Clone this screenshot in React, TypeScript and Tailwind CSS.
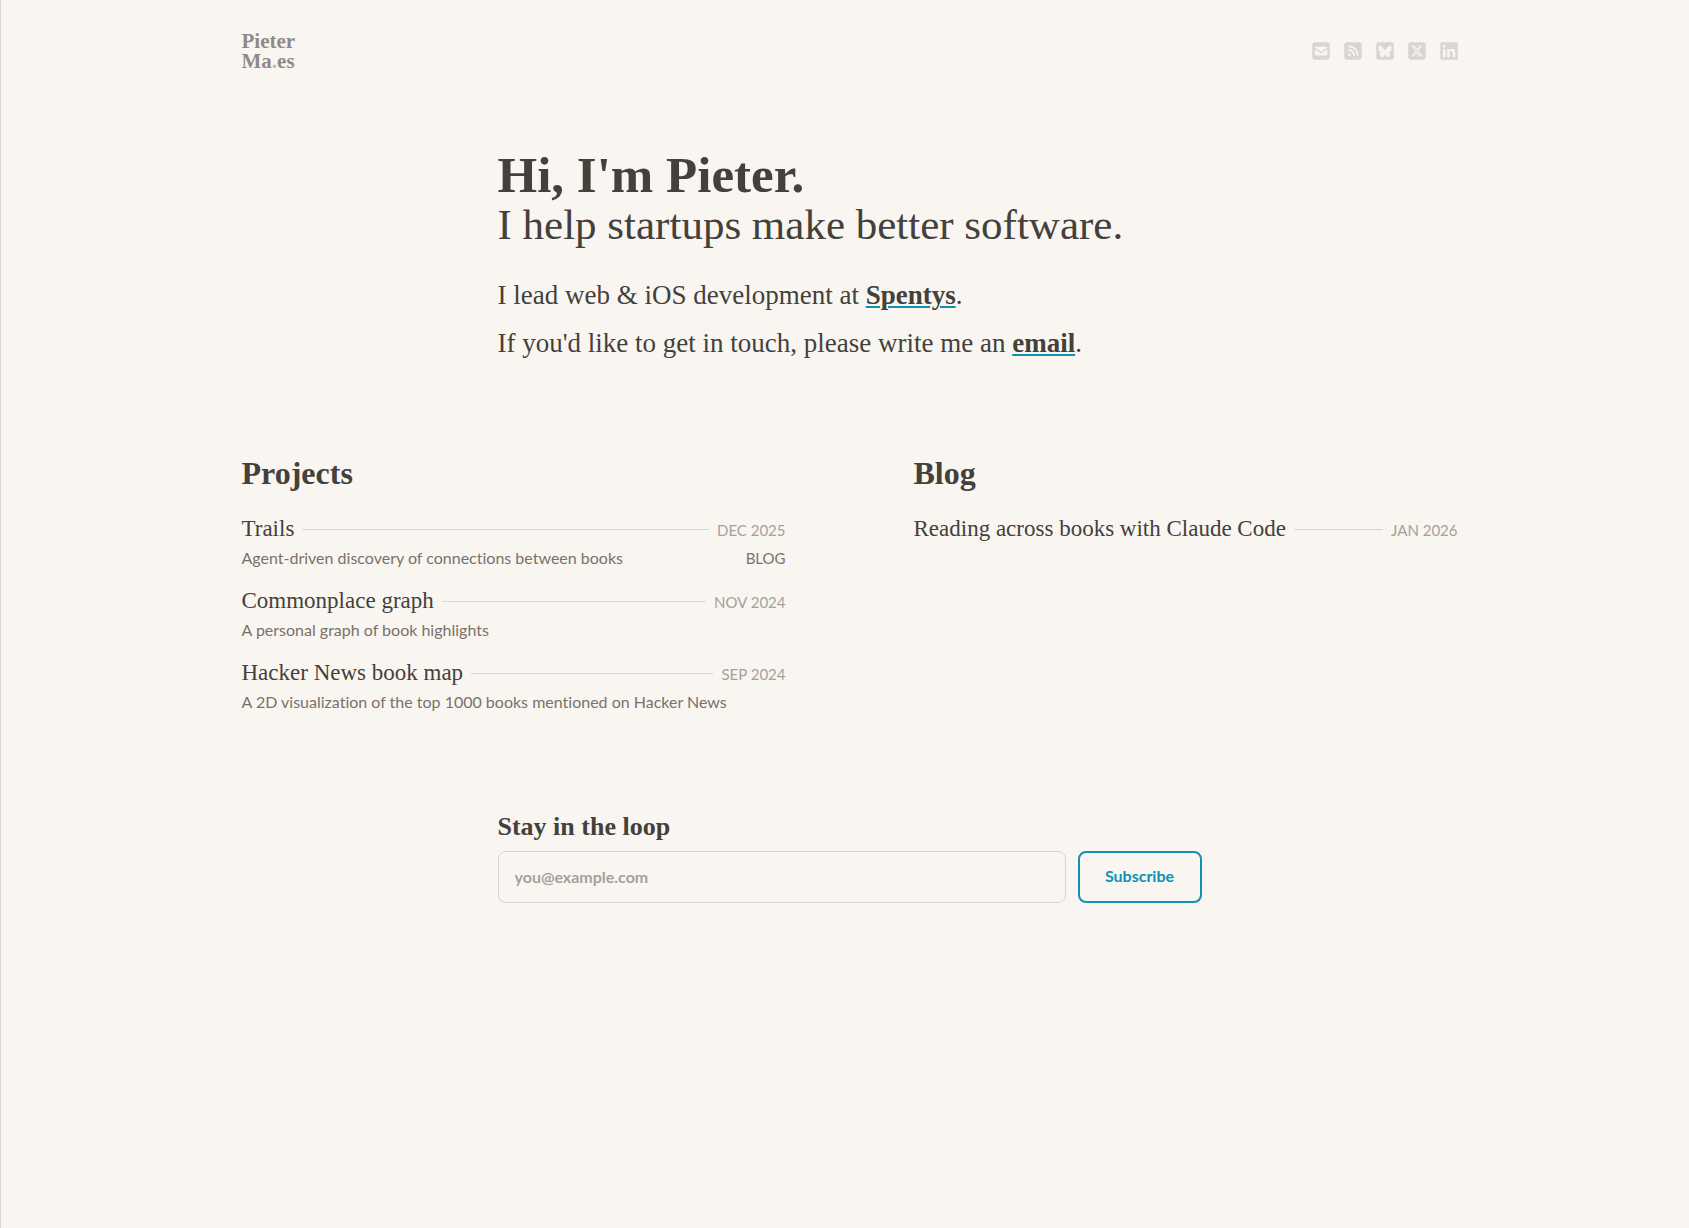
import type { ReactNode } from "react";
import {
  FaLinkedin,
  FaSquareEnvelope,
  FaSquareRss,
  FaSquareXTwitter,
} from "react-icons/fa6";

type Entry = {
  title: string;
  href: string;
  date: string;
  description?: string;
  link?: { label: string; href: string };
};

const PROJECTS: Entry[] = [
  {
    title: "Trails",
    href: "#trails",
    date: "Dec 2025",
    description: "Agent-driven discovery of connections between books",
    link: { label: "Blog", href: "#reading-across-books" },
  },
  {
    title: "Commonplace graph",
    href: "#commonplace",
    date: "Nov 2024",
    description: "A personal graph of book highlights",
  },
  {
    title: "Hacker News book map",
    href: "#hn-book-map",
    date: "Sep 2024",
    description: "A 2D visualization of the top 1000 books mentioned on Hacker News",
  },
];

const POSTS: Entry[] = [
  {
    title: "Reading across books with Claude Code",
    href: "#reading-across-books",
    date: "Jan 2026",
  },
];

// Same 448x512 frame as the Font Awesome squares it sits next to
function SquareBluesky({ className }: { className?: string }) {
  return (
    <svg viewBox="0 0 448 512" fill="currentColor" className={className}>
      <rect y="32" width="448" height="448" rx="64" />
      <path
        transform="translate(56 98) scale(14)"
        className="fill-[#f9f6f1]"
        d="M12 10.8c-1.087-2.114-4.046-6.053-6.798-7.995C2.566.944 1.561 1.266.902 1.565.139 1.908 0 3.08 0 3.768c0 .69.378 5.65.624 6.479.815 2.736 3.713 3.66 6.383 3.364-3.912.58-7.387 2.005-2.83 7.078 5.013 5.19 6.87-1.113 7.823-4.308.953 3.195 2.05 9.271 7.733 4.308 4.267-4.308 1.172-6.498-2.74-7.078 2.67.297 5.568-.628 6.383-3.364.246-.828.624-5.79.624-6.478 0-.69-.139-1.861-.902-2.206-.659-.298-1.664-.62-4.3 1.24C16.046 4.748 13.087 8.687 12 10.8Z"
      />
    </svg>
  );
}

const SOCIALS = [
  { label: "Email", href: "#email", Icon: FaSquareEnvelope },
  { label: "RSS", href: "#rss", Icon: FaSquareRss },
  { label: "Bluesky", href: "#bluesky", Icon: SquareBluesky },
  { label: "X", href: "#x", Icon: FaSquareXTwitter },
  { label: "LinkedIn", href: "#linkedin", Icon: FaLinkedin },
];

function Header() {
  return (
    <header className="mx-auto flex max-w-7xl items-center justify-between px-8 pt-[31px] pb-8">
      <a
        href="#home"
        className="text-[21px] leading-5 font-bold text-[#8f8a85] hover:text-stone-700"
      >
        Pieter
        <br />
        Ma<span className="text-[#bdb8b3]">.</span>es
      </a>
      <nav aria-label="Social links" className="flex gap-3.5">
        {SOCIALS.map(({ label, href, Icon }) => (
          <a
            key={label}
            href={href}
            aria-label={label}
            className="text-[#d9d5d2] hover:text-stone-500"
          >
            <Icon className="h-5 w-[18px]" />
          </a>
        ))}
      </nav>
    </header>
  );
}

function TextLink({ href, children }: { href: string; children: ReactNode }) {
  return (
    <a
      href={href}
      className="font-bold underline decoration-[#0e92b4] decoration-2 underline-offset-2"
    >
      {children}
    </a>
  );
}

function EntryList({ heading, entries }: { heading: string; entries: Entry[] }) {
  return (
    <section>
      <h2 className="text-[32px] leading-10 font-bold">{heading}</h2>
      <ul className="mt-5 flex flex-col gap-3.5">
        {entries.map((e) => (
          <li key={e.title}>
            <div className="flex items-center gap-2">
              <h3 className="text-[23px] leading-8">
                <a href={e.href}>{e.title}</a>
              </h3>
              <span className="h-px flex-1 bg-[#d9d6d2]" />
              <time className="pt-0.5 font-[Lato,sans-serif] text-[15px] leading-5 text-stone-400 uppercase">
                {e.date}
              </time>
            </div>
            {e.description && (
              <div className="flex items-baseline justify-between font-[Lato,sans-serif] leading-[26px] text-stone-500 [font-variant-ligatures:none]">
                <p>{e.description}</p>
                {e.link && (
                  <a href={e.link.href} className="text-[15px] uppercase">
                    {e.link.label}
                  </a>
                )}
              </div>
            )}
          </li>
        ))}
      </ul>
    </section>
  );
}

function Subscribe() {
  return (
    <form
      className="mx-auto mt-24 max-w-3xl px-8"
      onSubmit={(e) => e.preventDefault()}
    >
      <label htmlFor="email" className="block text-[26px] leading-8 font-bold">
        Stay in the loop
      </label>
      <div className="mt-2 flex gap-3 font-[Lato,sans-serif]">
        <input
          id="email"
          type="email"
          placeholder="you@example.com"
          className="h-[52px] min-w-0 flex-1 rounded-lg border border-stone-300 px-4 pb-0.5 font-bold placeholder:text-stone-400"
        />
        <button
          type="submit"
          className="h-[52px] w-[124px] rounded-lg border-2 border-[#0e92b4] pb-0.5 font-bold text-[#0e92b4]"
        >
          Subscribe
        </button>
      </div>
    </form>
  );
}

export default function App() {
  return (
    <div className="min-h-screen border-l border-[#d9d6d2] bg-[#f9f6f1] pb-24 pl-[9px] font-['Liberation_Serif',serif] text-stone-700">
      <Header />
      <main>
        <section className="mx-auto max-w-3xl px-8 pt-11">
          <h1 className="text-[51px] leading-14 font-bold">Hi, I'm Pieter.</h1>
          <p className="text-[43px] leading-11">
            I help startups make better software.
          </p>
          <div className="mt-8 flex flex-col gap-4 text-[27px] leading-8">
            <p>
              I lead web &amp; iOS development at{" "}
              <TextLink href="#spentys">Spentys</TextLink>.
            </p>
            <p>
              If you'd like to get in touch, please write me an{" "}
              <TextLink href="#email">email</TextLink>.
            </p>
          </div>
        </section>
        <div className="mx-auto mt-[94px] grid max-w-7xl gap-16 px-8 md:grid-cols-2 md:gap-32">
          <EntryList heading="Projects" entries={PROJECTS} />
          <EntryList heading="Blog" entries={POSTS} />
        </div>
        <Subscribe />
      </main>
    </div>
  );
}
